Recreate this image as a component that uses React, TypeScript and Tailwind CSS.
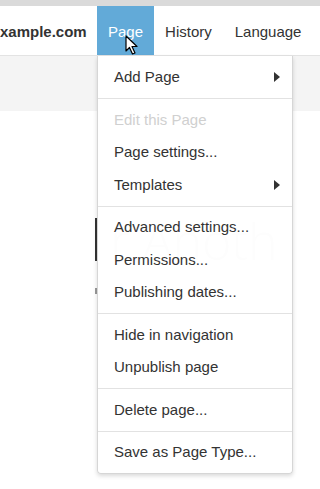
import React from "react";

const Arrow = () => (
  <svg width="6" height="10" viewBox="0 0 6 10" className="absolute right-[12px] top-1/2 -translate-y-1/2">
    <path d="M0 0 L6 5 L0 10 Z" fill="#333" />
  </svg>
);

const Item = ({ label, sub, disabled }: { label: string; sub?: boolean; disabled?: boolean }) => (
  <div
    className={`relative h-[32.5px] flex items-center pl-[16px] text-[15px] ${
      disabled ? "text-[#d0d0d0]" : "text-[#333]"
    }`}
  >
    {label}
    {sub && <Arrow />}
  </div>
);

const Divider = () => <div className="my-[4.5px] h-px bg-[#e2e2e2]" />;

export default function App() {
  return (
    <div
      className="relative w-[320px] h-[489px] overflow-hidden bg-white"
      style={{ fontFamily: '"Liberation Sans", Arial, sans-serif' }}
    >
      <div className="h-[6px] bg-[#dadada]" />
      <div className="h-[50px] flex items-stretch bg-white border-b border-[#e3e3e3] text-[15px]">
        <div className="flex items-center pt-[3px] font-bold text-[#333] w-[97px]">xample.com</div>
        <div className="relative flex items-center pt-[3px] bg-[#62aad8] text-white px-[11px]">
          Page
          <svg
            width="14"
            height="21"
            viewBox="0 0 14 21"
            className="absolute left-[28px] top-[29px]"
          >
            <path
              d="M1 1 L1 16 L4.5 12.5 L7.5 19 L10 18 L7 11.5 L12 11.5 Z"
              fill="#fff"
              stroke="#000"
              strokeWidth="1.2"
              strokeLinejoin="round"
            />
          </svg>
        </div>
        <div className="flex items-center pt-[3px] text-[#333] pl-[11px] pr-[23px]">History</div>
        <div className="flex items-center pt-[3px] text-[#333]">Language</div>
      </div>
      <div className="h-[55px] bg-[#f4f4f4]" />

      {/* ghost background content */}
      <div
        className="absolute left-[110px] top-[204px] text-[50px] text-[#dcdcdc] whitespace-nowrap"
        style={{ fontFamily: '"Open Sans", sans-serif', fontWeight: 300 }}
      >
        r Anoth
      </div>
      <div className="absolute left-[95px] top-[218px] w-[2px] h-[43px] bg-[#333]" />
      <div className="absolute left-[95px] top-[288px] w-[2px] h-[6px] bg-[#999]" />

      <div className="absolute left-[97px] top-[56px] w-[196px] pt-[5px] pb-[4px] bg-white/[0.92] border border-[#d6d6d6] border-t-0 rounded-b-[4px] shadow-[0_2px_4px_rgba(0,0,0,0.15)]">
        <Item label="Add Page" sub />
        <Divider />
        <Item label="Edit this Page" disabled />
        <Item label="Page settings..." />
        <Item label="Templates" sub />
        <Divider />
        <Item label="Advanced settings..." />
        <Item label="Permissions..." />
        <Item label="Publishing dates..." />
        <Divider />
        <Item label="Hide in navigation" />
        <Item label="Unpublish page" />
        <Divider />
        <Item label="Delete page..." />
        <Divider />
        <Item label="Save as Page Type..." />
      </div>
    </div>
  );
}
